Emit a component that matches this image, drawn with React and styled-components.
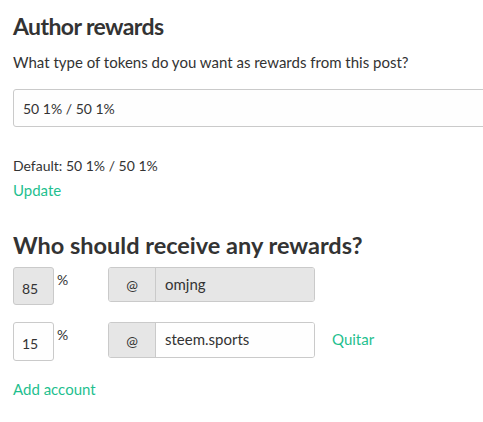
import React from "react";
import styled, { createGlobalStyle } from "styled-components";

const Global = createGlobalStyle`
  html, body { margin: 0; padding: 0; background: #fff; overflow: hidden; }
  body { font-family: Lato, "Noto Sans", sans-serif; color: #333; }
`;

const Page = styled.div`
  padding: 0 0 0 13px;
  width: 470px;
`;

const Title = styled.h2`
  margin: 0;
  font-size: ${(p) => p.$size || 23}px;
  font-weight: 700;
  color: #333;
  line-height: 30px;
  letter-spacing: ${(p) => p.$ls || 0}px;
  padding-top: ${(p) => p.$top || 0}px;
`;

const Text = styled.p`
  margin: 0;
  font-size: ${(p) => p.$size || 14}px;
  line-height: 20px;
  padding-top: ${(p) => p.$top || 0}px;
`;

const Field = styled.input`
  box-sizing: border-box;
  display: block;
  width: 560px;
  height: 38px;
  margin-top: ${(p) => p.$top || 0}px;
  padding: 0 9px;
  border: 1px solid #cacaca;
  border-radius: 3px;
  background: #fefefe;
  font: inherit;
  font-size: 14px;
  color: #333;
  outline: none;
`;

const Link = styled.a`
  display: block;
  font-size: 15px;
  line-height: 20px;
  color: #1fbf8f;
  text-decoration: none;
  margin-top: ${(p) => p.$top || 0}px;
`;

const Row = styled.div`
  display: flex;
  align-items: flex-start;
  margin-top: ${(p) => p.$top || 0}px;
`;

const PctBox = styled.input`
  box-sizing: border-box;
  width: 41px;
  height: ${(p) => p.$h}px;
  padding: 4px 8px 0;
  border: 1px solid #cacaca;
  border-radius: 3px;
  background: ${(p) => (p.disabled ? "#e6e6e6" : "#fefefe")};
  font: inherit;
  font-size: 14px;
  color: #333;
  outline: none;
`;

const Pct = styled.span`
  width: 51px;
  padding-left: 3px;
  font-size: 14px;
  line-height: 20px;
  margin-top: 3px;
`;

const Group = styled.div`
  display: flex;
  width: 207px;
  height: ${(p) => p.$h}px;
  box-sizing: border-box;
  border: 1px solid #cacaca;
  border-radius: 3px;
  overflow: hidden;
`;

const Addon = styled.span`
  width: 46px;
  display: flex;
  align-items: center;
  justify-content: center;
  background: #e6e6e6;
  border-right: 1px solid #cacaca;
  font-size: 14px;
`;

const Account = styled.input`
  flex: 1;
  min-width: 0;
  border: 0;
  padding: 0 9px 2px;
  background: ${(p) => (p.disabled ? "#e6e6e6" : "#fefefe")};
  font: inherit;
  font-size: 15px;
  color: #333;
  outline: none;
`;

const Remove = styled.a`
  margin-left: 17px;
  font-size: 15px;
  line-height: 20px;
  margin-top: 7px;
  color: #1fbf8f;
  text-decoration: none;
`;

export default function App() {
  return (
    <>
      <Global />
      <Page>
        <Title $top={11} $ls={-0.6}>Author rewards</Title>
        <Text $top={11} $size={15}>What type of tokens do you want as rewards from this post?</Text>
        <Field $top={17} readOnly value="50 1% / 50 1%" />
        <Text $top={29}>Default: 50 1% / 50 1%</Text>
        <Link $top={4} href="#">Update</Link>
        <Title $top={30} $size={23.5}>Who should receive any rewards?</Title>
        <Row $top={7}>
          <PctBox $h={38} disabled value="85" readOnly />
          <Pct>%</Pct>
          <Group $h={35}>
            <Addon>@</Addon>
            <Account disabled value="omjng" readOnly />
          </Group>
        </Row>
        <Row $top={17}>
          <PctBox $h={39} value="15" readOnly />
          <Pct>%</Pct>
          <Group $h={36}>
            <Addon>@</Addon>
            <Account value="steem.sports" readOnly />
          </Group>
          <Remove href="#">Quitar</Remove>
        </Row>
        <Link $top={18} href="#">Add account</Link>
      </Page>
    </>
  );
}
